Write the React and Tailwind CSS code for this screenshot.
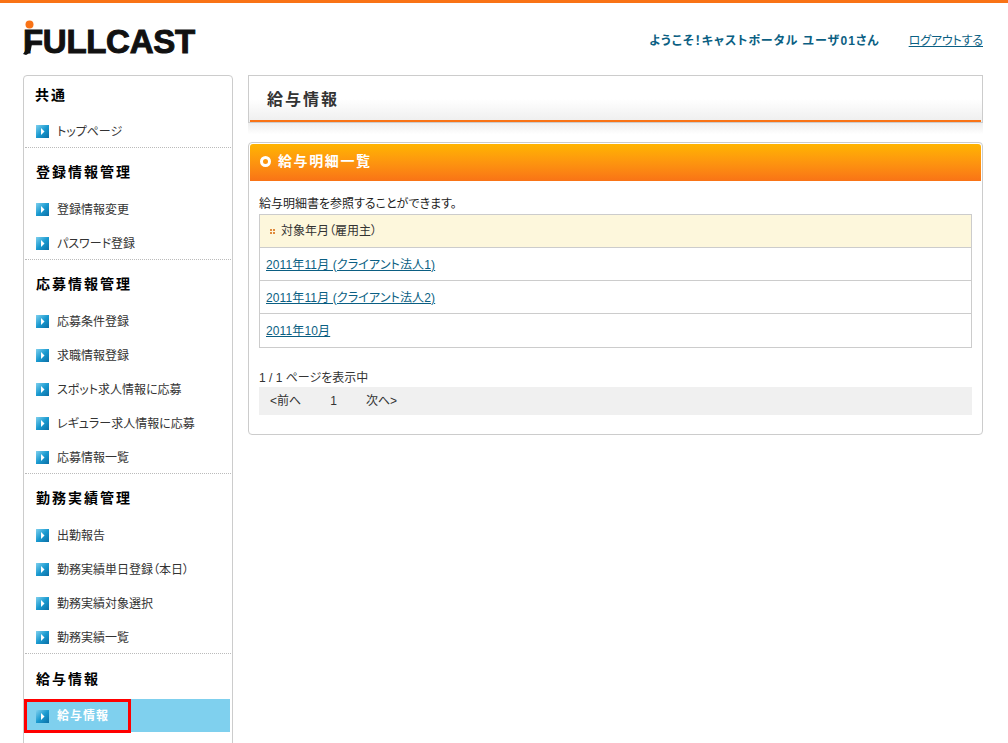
function Arrow() {
  return (
    <svg width="13" height="13" viewBox="0 0 13 13" className="mt-[2px] shrink-0">
      <defs>
        <linearGradient id="arrowGrad" x1="0" y1="0" x2="1" y2="1">
          <stop offset="0" stopColor="#7fd0ee" />
          <stop offset="0.5" stopColor="#1a9ad0" />
          <stop offset="1" stopColor="#0b6fa6" />
        </linearGradient>
      </defs>
      <rect width="13" height="13" fill="url(#arrowGrad)" />
      <path d="M5 3 L8.5 6.5 L5 10 Z" fill="#ffffff" />
    </svg>
  );
}

function Item({ label }) {
  return (
    <div className="flex h-[34px] items-center gap-[8px] pl-[11px] text-[12px] text-[#333333]">
      <Arrow />
      <span className="pt-[4px]">{label}</span>
    </div>
  );
}

function Section({ title, items }) {
  return (
    <div className="border-b border-dotted border-[#bbbbbb]">
      <div className="flex h-[43px] items-center pl-[11px] pt-[5px] text-[14px] font-bold tracking-[2px] text-black">{title}</div>
      {items.map((i) => (
        <Item key={i} label={i} />
      ))}
    </div>
  );
}

const sections = [
  ["登録情報管理", ["登録情報変更", "パスワード登録"]],
  ["応募情報管理", ["応募条件登録", "求職情報登録", "スポット求人情報に応募", "レギュラー求人情報に応募", "応募情報一覧"]],
  ["勤務実績管理", ["出勤報告", "勤務実績単日登録（本日）", "勤務実績対象選択", "勤務実績一覧"]],
];

const rows = ["2011年11月 (クライアント法人1)", "2011年11月 (クライアント法人2)", "2011年10月"];

export default function App() {
  return (
    <div className="h-[743px] w-[1008px] overflow-hidden bg-white font-['Liberation_Sans','Noto_Sans_CJK_JP',sans-serif] text-[12px] text-[#333333] [font-feature-settings:'palt']">
      <div className="h-[3px] bg-[#f97316]" />
      <header className="flex h-[72px] items-start justify-between pr-[25px] pl-[23px]">
        <div className="relative mt-[17px]">
          <svg width="9" height="9" viewBox="0 0 9 9" className="absolute top-0 left-[2px]">
            <circle cx="4.5" cy="4.5" r="4" fill="#f97316" />
          </svg>
          <svg width="10" height="11" viewBox="0 0 10 11" className="absolute top-[24px] left-0">
            <path d="M4 0 L9 0 L8 5 Q7 9 3 11 L0 10 Q3 7 4 0 Z" fill="#111111" />
          </svg>
          <div className="pt-[4px] font-['Liberation_Sans',sans-serif] text-[33px] leading-[36px] font-bold tracking-[-0.3px] text-[#111111] [-webkit-text-stroke:1px_#111111]">FULLCAST</div>
        </div>
        <div className="mt-[29px] flex items-center gap-[29px]">
          <span className="text-[12px] font-bold tracking-[1px] text-[#0b5f83]">ようこそ！キャストポータル ユーザ01さん</span>
          <a className="text-[12px] tracking-[-0.15px] text-[#0b5f83] underline">ログアウトする</a>
        </div>
      </header>
      <div className="flex items-start gap-[15px] pl-[23px]">
        <aside className="h-[700px] w-[210px] shrink-0 rounded-t-[4px] border border-[#cccccc] px-[1px]">
          <div className="border-b border-dotted border-[#bbbbbb]">
            <div className="flex h-[37px] items-center pl-[10px] pt-[2px] text-[14px] font-bold tracking-[2px] text-black">共通</div>
            <Item label="トップページ" />
          </div>
          {sections.map(([t, it]) => (
            <Section key={t} title={t} items={it} />
          ))}
          <div className="flex h-[45px] items-center pl-[11px] pt-[5px] text-[14px] font-bold tracking-[2px] text-black">給与情報</div>
          <div className="relative flex h-[33px] w-[205px] items-center gap-[8px] bg-[#7fd0ee] pl-[11px] text-[12px] font-bold tracking-[1px] text-white">
            <Arrow />
            <span>給与情報</span>
            <div className="absolute top-0 -left-[1px] h-[34px] w-[107px] border-[3px] border-[#ff0000]" />
          </div>
          <div className="-mt-[1px]">
            <Item label="" />
          </div>
        </aside>
        <main className="w-[735px] shrink-0">
          <div className="h-[48px] border border-[#cccccc] bg-gradient-to-b from-white from-50% to-[#eeeeee] px-[1px]">
            <div className="flex h-[46px] items-center border-b-[2px] border-[#f97316] pt-[4px] pl-[17px] text-[16px] font-bold tracking-[2px] text-[#333333]">給与情報</div>
          </div>
          <div className="h-[19px] bg-gradient-to-b from-[#eeeeee] to-white to-60%" />
          <section className="h-[293px] rounded-[4px] border border-[#cccccc] px-[1px] pt-[1px]">
            <div className="flex h-[37px] items-center gap-[7px] rounded-t-[3px] bg-gradient-to-b from-[#ffb400] to-[#f97316] pb-[2px] pl-[10px] text-[14px] font-bold tracking-[1.6px] text-white">
              <span className="box-border h-[11px] w-[11px] rounded-full border-[3px] border-white" />
              給与明細一覧
            </div>
            <div className="pr-[9px] pl-[9px]">
              <p className="mt-[14px] h-[19px] text-[12px] leading-[19px] text-[#222222]">給与明細書を参照することができます。</p>
              <div className="border border-[#cccccc]">
                <div className="flex h-[33px] items-center gap-[6px] border-b border-[#cccccc] bg-[#fdf7dc] pl-[10px]">
                  <span className="grid h-[5px] w-[5px] grid-cols-2 gap-[1px]">
                    <i className="bg-[#e08a3c]" /><i className="bg-[#e08a3c]" /><i className="bg-[#e08a3c]" /><i className="bg-[#e08a3c]" />
                  </span>
                  対象年月（雇用主）
                </div>
                {rows.map((r, i) => (
                  <div key={r} className={`flex h-[33px] items-center pl-[6px] pt-[1px] ${i < 2 ? "border-b border-[#cccccc]" : ""}`}>
                    <a className="tracking-[0.13px] text-[#0b5f83] underline">{r}</a>
                  </div>
                ))}
              </div>
              <p className="mt-[20px] h-[19px] leading-[20px]">1 / 1 ページを表示中</p>
              <div className="flex h-[28px] items-center gap-[29px] bg-[#f0f0f0] pl-[11px]">
                <span>&lt;前へ</span>
                <span>1</span>
                <span>次へ&gt;</span>
              </div>
            </div>
          </section>
        </main>
      </div>
    </div>
  );
}
